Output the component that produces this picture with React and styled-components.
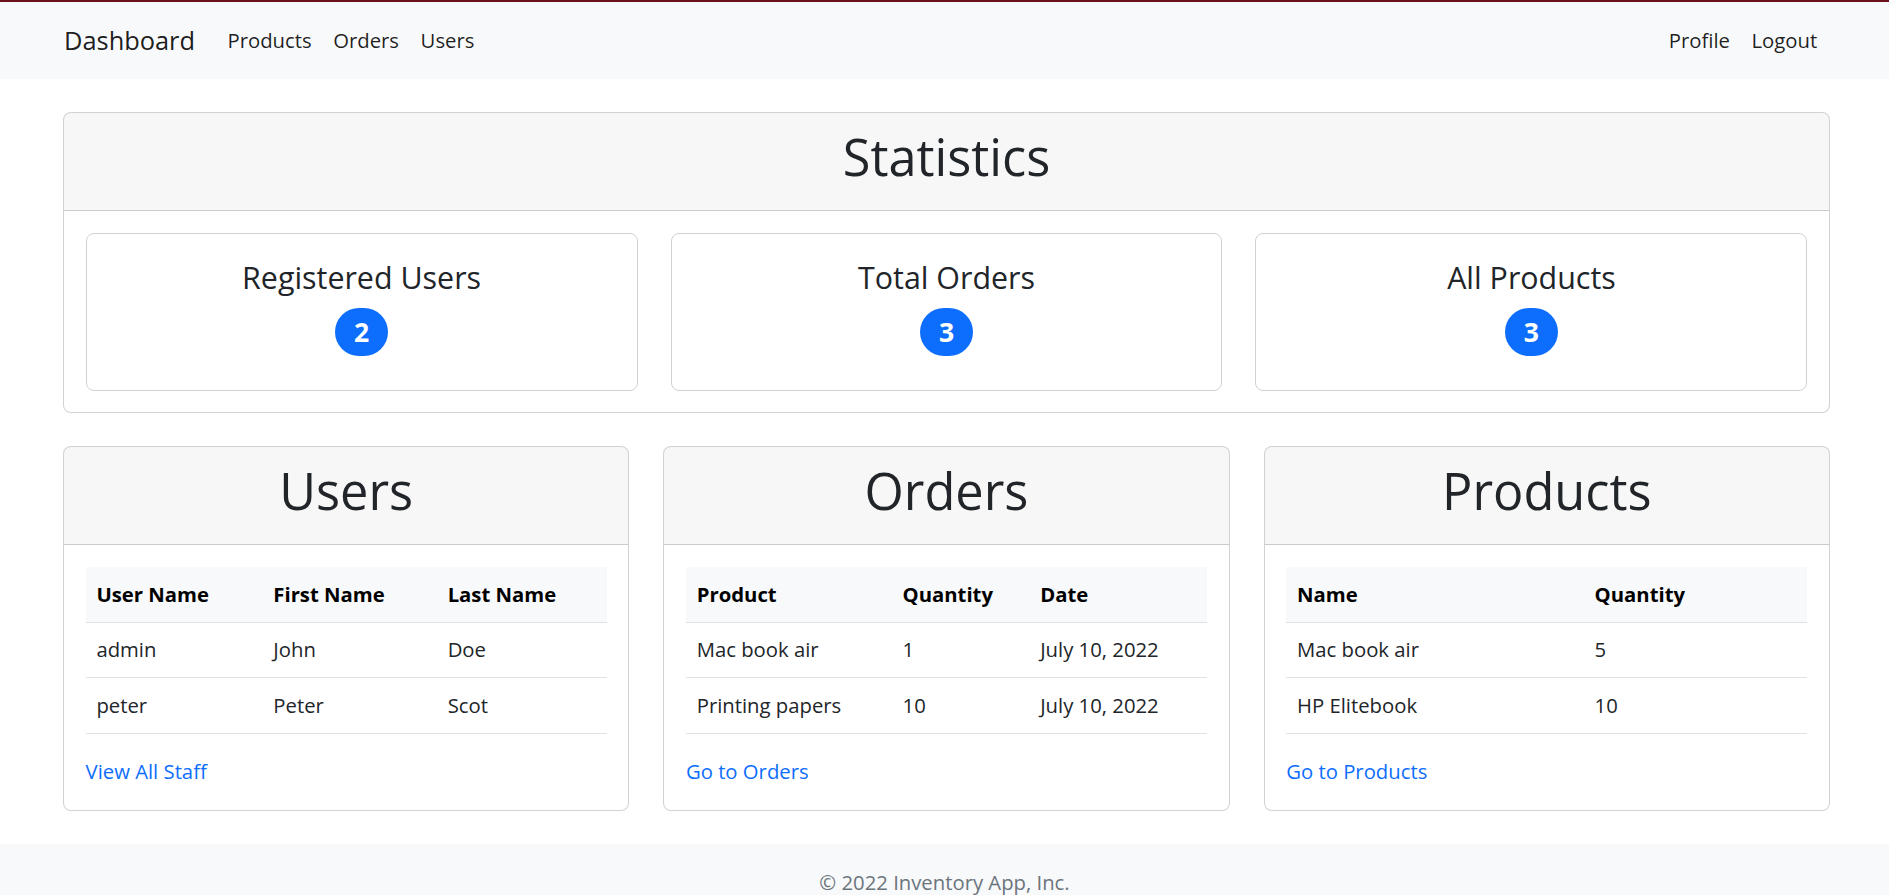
import React from 'react';
import styled, { createGlobalStyle } from 'styled-components';

const GlobalStyle = createGlobalStyle`
    html, body {
        margin: 0;
        padding: 0;
        overflow: hidden;
    }
    body {
        font-family: "Segoe UI", "Open Sans", "Noto Sans", Arial, sans-serif;
        font-size: 20.3px;
        line-height: 32.4px;
        color: #212529;
        background: #fff;
    }
    * { box-sizing: border-box; }
`;

const users = [
    { username: 'admin', first: 'John', last: 'Doe' },
    { username: 'peter', first: 'Peter', last: 'Scot' },
];

const orders = [
    { product: 'Mac book air', qty: 1, date: 'July 10, 2022' },
    { product: 'Printing papers', qty: 10, date: 'July 10, 2022' },
];

const products = [
    { name: 'Mac book air', qty: 5 },
    { name: 'HP Elitebook', qty: 10 },
];

const stats = [
    { label: 'Registered Users', value: users.length },
    { label: 'Total Orders', value: 3 },
    { label: 'All Products', value: 3 },
];

function DataTable({ columns, widths, rows }) {
    return (
        <Table>
            <colgroup>
                {widths.map((w, i) => <col key={i} style={{ width: w }} />)}
            </colgroup>
            <thead>
                <tr>
                    {columns.map((c) => <Th key={c}>{c}</Th>)}
                </tr>
            </thead>
            <tbody>
                {rows.map((row, i) => (
                    <tr key={i}>
                        {row.map((cell, j) => <Td key={j}>{cell}</Td>)}
                    </tr>
                ))}
            </tbody>
        </Table>
    );
}

export default function App() {
    return (
        <>
            <GlobalStyle />
            <Navbar>
                <Brand href="#">Dashboard</Brand>
                <NavList>
                    <NavLink href="#">Products</NavLink>
                    <NavLink href="#">Orders</NavLink>
                    <NavLink href="#">Users</NavLink>
                </NavList>
                <NavList $right>
                    <NavLink href="#">Profile</NavLink>
                    <NavLink href="#">Logout</NavLink>
                </NavList>
            </Navbar>

            <Main>
                <Card>
                    <CardHeader>
                        <Title>Statistics</Title>
                    </CardHeader>
                    <CardBody>
                        <StatGrid>
                            {stats.map((s) => (
                                <StatBox key={s.label}>
                                    <StatLabel>{s.label}</StatLabel>
                                    <Badge>{s.value}</Badge>
                                </StatBox>
                            ))}
                        </StatGrid>
                    </CardBody>
                </Card>

                <PanelGrid>
                    <Card>
                        <CardHeader>
                            <Title>Users</Title>
                        </CardHeader>
                        <CardBody>
                            <DataTable
                                columns={['User Name', 'First Name', 'Last Name']}
                                widths={['33.95%', '33.45%', '32.6%']}
                                rows={users.map((u) => [u.username, u.first, u.last])}
                            />
                            <Link href="#">View All Staff</Link>
                        </CardBody>
                    </Card>
                    <Card>
                        <CardHeader>
                            <Title>Orders</Title>
                        </CardHeader>
                        <CardBody>
                            <DataTable
                                columns={['Product', 'Quantity', 'Date']}
                                widths={['39.5%', '26.4%', '34.1%']}
                                rows={orders.map((o) => [o.product, o.qty, o.date])}
                            />
                            <Link href="#">Go to Orders</Link>
                        </CardBody>
                    </Card>
                    <Card>
                        <CardHeader>
                            <Title>Products</Title>
                        </CardHeader>
                        <CardBody>
                            <DataTable
                                columns={['Name', 'Quantity']}
                                widths={['57.1%', '42.9%']}
                                rows={products.map((p) => [p.name, p.qty])}
                            />
                            <Link href="#">Go to Products</Link>
                        </CardBody>
                    </Card>
                </PanelGrid>
            </Main>

            <Footer>© 2022 Inventory App, Inc.</Footer>
        </>
    );
}

const Navbar = styled.nav`
    display: flex;
    align-items: center;
    border-top: 2px solid #6b111c;
    background-color: #f8f9fa;
    padding: 11.4px 61px 11.4px 64px;
`;

const Brand = styled.a`
    font-size: 25.4px;
    line-height: 40.5px;
    padding: 6.75px 0;
    margin-right: 21.6px;
    color: rgba(0, 0, 0, 0.9);
    text-decoration: none;
`;

const NavList = styled.div`
    display: flex;
    margin-left: ${(p) => (p.$right ? 'auto' : '0')};
`;

const NavLink = styled.a`
    padding: 10.8px;
    color: rgba(0, 0, 0, 0.88);
    text-decoration: none;
`;

const Main = styled.main`
    margin: 33px 59px 33px 63px;
`;

const Card = styled.div`
    display: flex;
    flex-direction: column;
    border: 1px solid rgba(0, 0, 0, 0.175);
    border-radius: 8px;
    background: #fff;
    overflow: hidden;
`;

const CardHeader = styled.div`
    padding: 12px 21.6px 0;
    background-color: rgba(0, 0, 0, 0.03);
    border-bottom: 1px solid rgba(0, 0, 0, 0.175);
`;

const Title = styled.h1`
    margin: 0 0 20.4px;
    text-align: center;
    font-size: 50.5px;
    line-height: 64.8px;
    font-weight: 400;
    color: #212529;
`;

const CardBody = styled.div`
    padding: 21.6px;
`;

const StatGrid = styled.div`
    display: grid;
    grid-template-columns: repeat(3, 1fr);
    gap: 33px;
`;

const StatBox = styled.div`
    display: flex;
    flex-direction: column;
    align-items: center;
    border: 1px solid rgba(0, 0, 0, 0.175);
    border-radius: 8px;
    padding: 25.2px 21.6px 33.6px;
`;

const StatLabel = styled.h4`
    margin: 0 0 10.4px;
    font-size: 30.4px;
    line-height: 38.9px;
    font-weight: 400;
`;

const Badge = styled.span`
    display: inline-flex;
    align-items: center;
    justify-content: center;
    min-width: 53px;
    height: 48px;
    padding: 0 17px;
    border-radius: 50rem;
    background-color: #0d6efd;
    color: #fff;
    font-size: 26.6px;
    font-weight: 700;
    line-height: 1;
`;

const PanelGrid = styled.div`
    display: grid;
    grid-template-columns: repeat(3, 1fr);
    gap: 34px;
    margin-top: 33px;
`;

const Table = styled.table`
    width: 100%;
    table-layout: fixed;
    border-collapse: collapse;
    margin-bottom: 21.6px;
    line-height: 33px;
`;

const Th = styled.th`
    text-align: left;
    padding: 10.8px;
    font-weight: 700;
    color: #000;
    background-color: #f8f9fa;
    border-bottom: 1px solid #dee2e6;
`;

const Td = styled.td`
    padding: 10.8px;
    border-bottom: 1px solid #dee2e6;
    color: #212529;
`;

const Link = styled.a`
    display: inline-block;
    line-height: 33px;
    color: #0d6efd;
    text-decoration: none;
`;

const Footer = styled.footer`
    background-color: #f8f9fa;
    padding: 22px 0;
    text-align: center;
    color: #6c757d;
`;
